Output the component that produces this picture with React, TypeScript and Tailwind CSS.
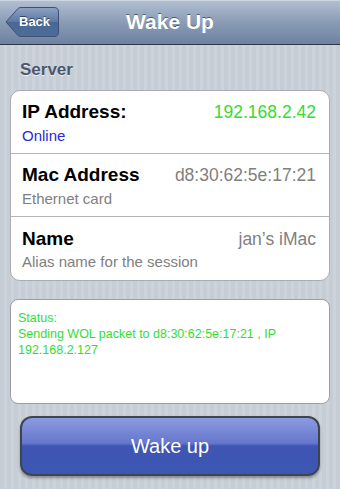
import React from "react";

function BackButton() {
  return (
    <div className="relative h-[30px] w-[54px]">
      <svg width="54" height="30" viewBox="0 0 54 30" className="absolute left-0 top-0">
        <defs>
          <linearGradient id="bb" x1="0" y1="0" x2="0" y2="1">
            <stop offset="0" stopColor="#8ea3c2" />
            <stop offset="0.5" stopColor="#5b77a2" />
            <stop offset="0.51" stopColor="#4a6894" />
            <stop offset="1" stopColor="#4d6c99" />
          </linearGradient>
        </defs>
        <path
          d="M1 15 L13 1.5 Q14 0.5 16 0.5 L49 0.5 Q53.5 0.5 53.5 5 L53.5 25 Q53.5 29.5 49 29.5 L16 29.5 Q14 29.5 13 28.5 Z"
          fill="url(#bb)"
          stroke="#3b5275"
          strokeWidth="1"
        />
      </svg>
      <span
        className="absolute left-[14px] top-0 flex h-[30px] items-center text-[13px] font-bold text-white"
        style={{ textShadow: "0 -1px 0 rgba(0,0,0,0.5)" }}
      >
        Back
      </span>
    </div>
  );
}

function Row({
  title,
  sub,
  subClass,
  value,
  valueClass,
  last,
}: {
  title: string;
  sub: string;
  subClass: string;
  value: string;
  valueClass: string;
  last?: boolean;
}) {
  return (
    <div
      className={
        "flex h-[63px] flex-col justify-center pl-[11px] pr-[13px] " +
        (last ? "" : "border-b border-[#b5b5b5]")
      }
    >
      <div className="flex items-baseline justify-between">
        <span className="text-[19px] font-bold leading-[23px] text-black">{title}</span>
        <span className={valueClass}>{value}</span>
      </div>
      <div className={subClass}>{sub}</div>
    </div>
  );
}

export default function App() {
  return (
    <div
      className="flex h-[489px] w-[340px] flex-col overflow-hidden bg-[repeating-linear-gradient(90deg,#c6cdd5_0px,#c6cdd5_4px,#ccd3da_4px,#ccd3da_7px)]"
      style={{ fontFamily: '"Liberation Sans", Arial, sans-serif' }}
    >
      <div className="relative flex h-[45px] shrink-0 items-center border-b border-[#2d3642] bg-gradient-to-b from-[#b4c0d1] via-[#8a9cb6] to-[#6d82a0] px-[5px]">
        <div className="absolute left-0 right-0 top-0 h-px bg-[#cdd5df]" />
        <BackButton />
        <div
          className="absolute left-0 right-0 top-0 flex h-[44px] items-center justify-center text-[21px] font-bold text-white"
          style={{ textShadow: "0 -1px 0 rgba(0,0,0,0.45)" }}
        >
          Wake Up
        </div>
      </div>

      <div
        className="mt-[15px] px-[20px] text-[17px] font-bold leading-[20px] text-[#4c566c]"
        style={{ textShadow: "0 1px 0 rgba(255,255,255,0.7)" }}
      >
        Server
      </div>

      <div className="mx-[10px] mt-[10px] overflow-hidden rounded-[10px] border border-[#a8adb3] bg-white">
        <Row
          title="IP Address:"
          sub="Online"
          subClass="mt-[1px] text-[15px] leading-[18px] text-[#2a2ad6]"
          value="192.168.2.42"
          valueClass="text-[17.5px] text-[#33dd33]"
        />
        <Row
          title="Mac Address"
          sub="Ethernet card"
          subClass="mt-[1px] text-[15px] leading-[18px] text-[#808080]"
          value="d8:30:62:5e:17:21"
          valueClass="text-[17.5px] text-[#7f7f7f]"
        />
        <Row
          title="Name"
          sub="Alias name for the session"
          subClass="mt-[1px] text-[15px] leading-[18px] text-[#808080]"
          value="jan’s iMac"
          valueClass="text-[17.5px] text-[#7f7f7f]"
          last
        />
      </div>

      <div className="mx-[10px] mt-[18px] h-[105px] rounded-[8px] border border-[#9a9fa5] bg-white px-[7px] pt-[10px] text-[12.5px] leading-[16px] text-[#33dd33]">
        <div>Status:</div>
        <div>Sending WOL packet to d8:30:62:5e:17:21 , IP 192.168.2.127</div>
      </div>

      <div className="mx-[20px] mt-[12px] flex h-[60px] items-center justify-center rounded-[12px] border-2 border-[#3f4550] bg-[linear-gradient(180deg,#8b9be0_0%,#6676cc_45%,#3f55b4_50%,#3c57b2_100%)] text-[20px] text-white shadow-[0_2px_3px_rgba(0,0,0,0.35)]">
        Wake up
      </div>
    </div>
  );
}
